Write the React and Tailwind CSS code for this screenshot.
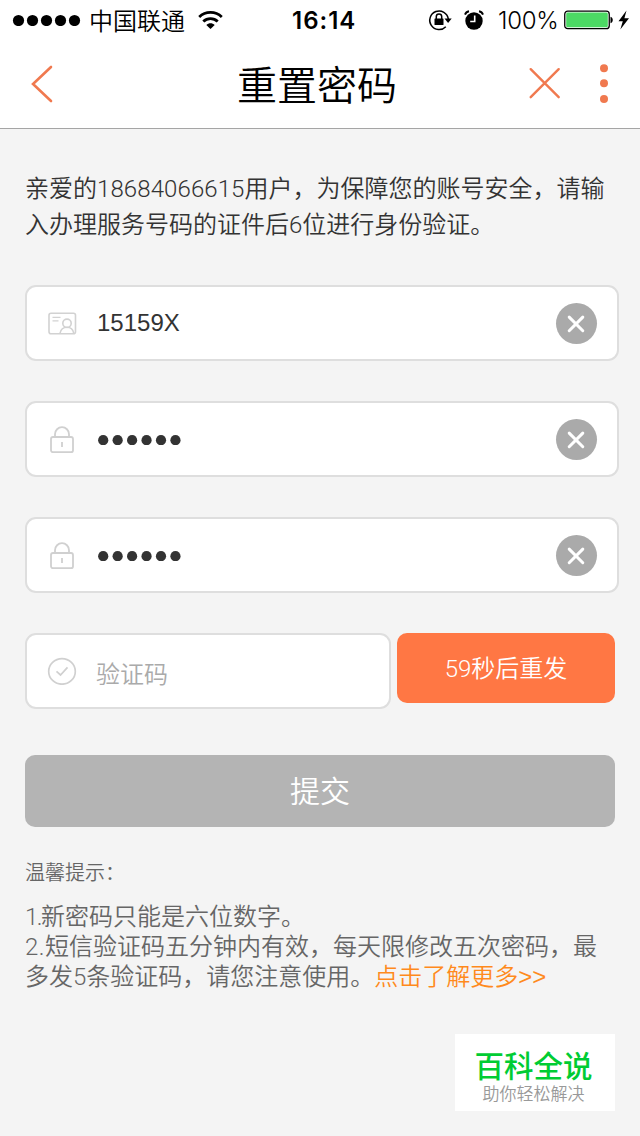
import React from 'react';

const TEXT_FONT = "font-['Roboto','Noto_Sans_CJK_SC',sans-serif]";

const IdCardIcon = () => (
  <svg width="30" height="24" viewBox="0 0 30 24" fill="none" stroke="#d2d2d2" strokeWidth="1.6">
    <rect x="2" y="2.300" width="26.500" height="20.500" rx="2" />
    <path d="M5.500 6.300h8M5.500 9.800h6" strokeWidth="1.300" />
    <circle cx="20" cy="12.300" r="4.2" />
    <path d="M13 22.300c.8-4 3.400-6 7-6s6 2 6.800 6" />
  </svg>
);

const LockIcon = () => (
  <svg width="26" height="30" viewBox="0 0 26 30" fill="none" stroke="#d0d0d0" strokeWidth="1.8">
    <rect x="2" y="13" width="22" height="15.200" rx="2" />
    <path d="M6 12.700V10.200a7 7 0 0 1 14 0V12.700" />
    <path d="M13 18v5" />
  </svg>
);

const CheckIcon = () => (
  <svg width="30" height="28" viewBox="0 0 30 28" fill="none" stroke="#d0d0d0" strokeWidth="1.7">
    <ellipse cx="15" cy="14.400" rx="13.300" ry="12.800" />
    <path d="M9.500 14.400l4 3.600 7-7.600" />
  </svg>
);

const ClearButton = () => (
  <button type="button" className="flex h-[41px] w-[41px] items-center justify-center rounded-full bg-[#aaaaaa]">
    <svg width="20" height="20" viewBox="0 0 20 20" stroke="#fff" strokeWidth="3" strokeLinecap="round">
      <path d="M3.200 4.100l13.600 13.600M16.800 4.100L3.200 17.700" />
    </svg>
  </button>
);

const Field = ({ icon, children, className, clearable }) => (
  <div className={`flex h-[76px] items-center rounded-[11px] border-2 border-[#dedede] bg-white pl-5 pr-[20.5px] ${className}`}>
    <span className="flex w-[30px] justify-center">{icon}</span>
    <div className="ml-5 flex-1">{children}</div>
    {clearable && <ClearButton />}
  </div>
);

const PasswordDots = () => (
  <svg className="block" width="86" height="12" viewBox="0 0 86 12" fill="#333">
    {[0, 1, 2, 3, 4, 5].map(i => (
      <circle key={i} cx={6.2 + i * 14.45} cy="7.2" r="5.1" />
    ))}
  </svg>
);

const StatusBar = () => (
  <div className="flex h-10 items-center pl-3 text-black">
    <svg width="70" height="12" viewBox="0 0 70 12">
      {[0, 1, 2, 3, 4].map(i => (
        <circle key={i} cx={6.5 + i * 14} cy="6.5" r="5.6" />
      ))}
    </svg>
    <span className="ml-[7px] w-24 whitespace-nowrap font-['Noto_Sans_CJK_SC',sans-serif] text-2xl leading-10 font-[350]">中国联通</span>
    <svg className="ml-[13px]" width="25" height="20" viewBox="0 0 25 20" fill="none" stroke="#000" strokeWidth="2.800">
      <path d="M1.200 6.900C7.500.9 17.500.9 23.800 6.900" />
      <path d="M5.300 11.500c4-3.900 10.400-3.900 14.400 0" />
      <path d="M8.300 14.900c2.400-2.300 6-2.300 8.400 0L12.500 19.100z" fill="#000" stroke="none" />
    </svg>
    <span className="ml-[69px] w-[66px] whitespace-nowrap pt-px font-['Inter',sans-serif] text-[24px] leading-10 font-semibold tracking-[1px]">16:14</span>
    <svg className="ml-[70px]" width="24" height="22" viewBox="0 0 24 22" fill="none" stroke="#000" strokeWidth="1.500">
      <path d="M17.800 17.700A9.300 9.300 0 1 1 20.300 10" />
      <path d="M16.500 9.500h7.200L20.100 14z" fill="#000" stroke="none" />
      <rect x="6.500" y="9.500" width="9" height="6.500" rx=".6" fill="#000" stroke="none" />
      <path d="M8.300 10V7.600a2.700 2.700 0 0 1 5.400 0V10" />
    </svg>
    <svg className="ml-3" width="20" height="20" viewBox="0 0 20 20">
      <circle cx="10" cy="11" r="8.700" />
      <path d="M1 4.600A5 5 0 0 1 5 1.200M19 4.600a5 5 0 0 0-4-3.400" fill="none" stroke="#000" strokeWidth="1.900" />
      <path d="M10.700 5.500v6H6.200" fill="none" stroke="#fff" strokeWidth="1.600" />
    </svg>
    <span className="ml-[14px] w-[60px] whitespace-nowrap pt-px font-['Inter',sans-serif] text-[24px] leading-10 font-[350] tracking-[-0.3px]">100%</span>
    <svg className="ml-[6px]" width="66" height="20" viewBox="0 0 66 20">
      <rect x=".75" y="1.200" width="44.500" height="17.500" rx="3" fill="#fff" stroke="#000" strokeWidth="1.300" />
      <rect x="2.200" y="2.600" width="41.600" height="14.700" rx="1.500" fill="#4cd964" />
      <path d="M46.500 6.700c3 .5 3 6 0 6.500z" />
      <path d="M62.500 .5L54.500 11.200h4.300L56.300 19.500l8.700-11.200h-4.600z" />
    </svg>
  </div>
);

const NavBar = () => (
  <div className="flex h-[88px] items-center justify-between pl-[30px] pr-[31px]">
    <svg width="71" height="40" viewBox="0 0 71 40" fill="none" stroke="#f0794f" strokeWidth="2.600" strokeLinecap="round">
      <path d="M21 3L3 20l18 17" />
    </svg>
    <h1 className="-mr-1 pb-px whitespace-nowrap font-['Noto_Sans_CJK_SC',sans-serif] text-[40px] leading-[85px] font-[350] text-black">重置密码</h1>
    <svg className="mb-[3px]" width="80" height="40" viewBox="0 0 80 40" fill="none" stroke="#f0794f" strokeWidth="2.400" strokeLinecap="round">
      <path d="M1.700 6.200l28 28M29.700 6.200l-28 28" />
      <g fill="#f0794f" stroke="none">
        <circle cx="75" cy="5.200" r="4" />
        <circle cx="75" cy="20.200" r="4" />
        <circle cx="75" cy="36" r="4" />
      </g>
    </svg>
  </div>
);

export default function App() {
  return (
    <div className={`flex h-[1136px] w-[640px] flex-col overflow-hidden bg-[#f4f4f4] ${TEXT_FONT}`}>
      <header className="h-[129px] border-b border-[#a5a5a5] bg-white">
        <StatusBar />
        <NavBar />
      </header>

      <main className="flex flex-col pl-[25px] pt-[42px] font-[350]">
        <p className="whitespace-nowrap text-2xl leading-9 text-[#333]">
          亲爱的<span className="tracking-[0.1px]">18684066615</span>用户，为保障您的账号安全，请输
          <br />
          入办理服务号码的证件后6位进行身份验证。
        </p>

        <div className="mt-[42px] flex flex-col gap-10">
          <Field icon={<IdCardIcon />} className="w-[594px]" clearable>
            <span className="font-['Liberation_Sans',sans-serif] text-2xl text-[#333]">15159X</span>
          </Field>
          <Field icon={<LockIcon />} className="w-[594px]" clearable>
            <PasswordDots />
          </Field>
          <Field icon={<LockIcon />} className="w-[594px]" clearable>
            <PasswordDots />
          </Field>
          <div className="flex items-start gap-1.5">
            <Field icon={<CheckIcon />} className="w-[366px]">
              <span className="-ml-px block pt-[8px] text-2xl text-[#aaa]">验证码</span>
            </Field>
            <button type="button" className="h-[70px] w-[218px] rounded-[10px] bg-[#ff7744] pt-px text-2xl text-white">
              59秒后重发
            </button>
          </div>
        </div>

        <button type="button" className="mt-[46px] h-[72px] w-[590px] rounded-[10px] bg-[#b4b4b4] text-[30px] text-white">
          提交
        </button>

        <h2 className="mt-[31px] text-xl leading-[30px] text-[#666]">温馨提示：</h2>
        <div className="mt-[14px] whitespace-nowrap text-2xl leading-[30px] text-[#666]">
          <p><span className="tracking-[-1.5px]">1.</span>新密码只能是六位数字。</p>
          <p><span className="tracking-[0.5px]">2.</span>短信验证码五分钟内有效，每天限修改五次密码，最</p>
          <p>多发5条验证码，请您注意使用。<a className="text-[#ff8a1c]">点击了解更多<span className="font-['Liberation_Sans',sans-serif]">&gt;&gt;</span></a></p>
        </div>
      </main>

      <div className="ml-[455px] mt-[42px] flex h-[77px] w-40 flex-col items-center bg-white pt-[10px] font-['Noto_Sans_CJK_SC',sans-serif]">
        <span className="-ml-[3px] text-[29.5px] leading-10 font-medium text-[#0c3]">百科全说</span>
        <span className="-ml-[3px] pt-px text-[17px] leading-4 font-[350] text-[#999]">助你轻松解决</span>
      </div>
    </div>
  );
}
